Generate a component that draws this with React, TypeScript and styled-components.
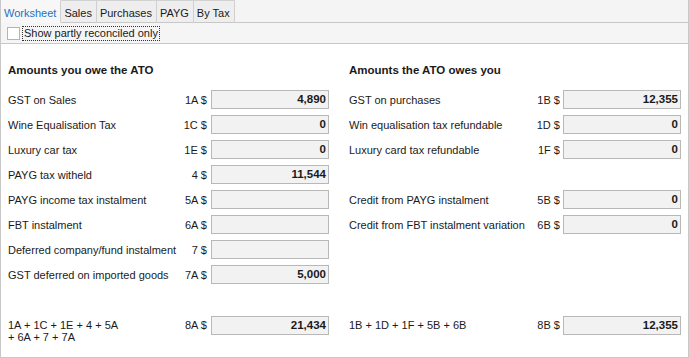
import styled, { createGlobalStyle } from 'styled-components';

const GlobalStyle = createGlobalStyle`
  html, body {
    margin: 0;
    padding: 0;
    background: #ffffff;
  }
  body {
    font-family: 'Liberation Sans', Arial, sans-serif;
    font-size: 11px;
    color: #1a1a1a;
  }
`;

type Row = {
  label: string;
  code?: string;
  value?: string;
  blank?: boolean;
};

const owe: Row[] = [
  { label: 'GST on Sales', code: '1A', value: '4,890' },
  { label: 'Wine Equalisation Tax', code: '1C', value: '0' },
  { label: 'Luxury car tax', code: '1E', value: '0' },
  { label: 'PAYG tax witheld', code: '4', value: '11,544' },
  { label: 'PAYG income tax instalment', code: '5A', value: '' },
  { label: 'FBT instalment', code: '6A', value: '' },
  { label: 'Deferred company/fund instalment', code: '7', value: '' },
  { label: 'GST deferred on imported goods', code: '7A', value: '5,000' },
];

const owed: Row[] = [
  { label: 'GST on purchases', code: '1B', value: '12,355' },
  { label: 'Win equalisation tax refundable', code: '1D', value: '0' },
  { label: 'Luxury card tax refundable', code: '1F', value: '0' },
  { label: '', blank: true },
  { label: 'Credit from PAYG instalment', code: '5B', value: '0' },
  { label: 'Credit from FBT instalment variation', code: '6B', value: '0' },
];

const tabs = ['Worksheet', 'Sales', 'Purchases', 'PAYG', 'By Tax'];

const Frame = styled.div`
  width: 689px;
  height: 358px;
  box-sizing: border-box;
  display: flex;
  flex-direction: column;
  border-left: 1px solid #c8c8c8;
  border-right: 1px solid #c8c8c8;
  border-bottom: 1px solid #c8c8c8;
  background: #ffffff;
`;

const TabStrip = styled.div`
  display: flex;
  height: 23px;
  background: #f4f4f4;
`;

const Tab = styled.div<{ $active?: boolean }>`
  box-sizing: border-box;
  height: 23px;
  padding: 2px 4px 0 3px;
  display: flex;
  align-items: center;
  font-size: 11px;
  color: ${(p) => (p.$active ? '#1e72c6' : '#1a1a1a')};
  background: ${(p) => (p.$active ? '#f7f7f7' : '#eeeeee')};
  border-top: 1px solid ${(p) => (p.$active ? 'transparent' : '#d2d2d2')};
  border-right: 1px solid #d0d0d0;
  border-bottom: 1px solid ${(p) => (p.$active ? 'transparent' : '#c8c8c8')};
`;

const TabFiller = styled.div`
  flex: 1;
  border-bottom: 1px solid #c8c8c8;
`;

const FilterBar = styled.div`
  box-sizing: border-box;
  height: 21px;
  display: flex;
  align-items: center;
  gap: 3px;
  padding-left: 6px;
  background: #f5f5f5;
  border-bottom: 1px solid #c8c8c8;
`;

const CheckBox = styled.span`
  box-sizing: border-box;
  width: 13px;
  height: 13px;
  background: #ffffff;
  border: 1px solid #b4b4b4;
`;

const CheckLabel = styled.span`
  font-size: 11px;
  line-height: 13px;
  outline: 1px dotted #333;
  padding: 0 1px;
`;

const Content = styled.div`
  flex: 1;
  display: flex;
  gap: 19px;
  padding: 19px 0 0 6px;
`;

const Panel = styled.div<{ $width: number }>`
  width: ${(p) => p.$width}px;
  display: flex;
  flex-direction: column;
`;

const Heading = styled.div`
  font-weight: bold;
  font-size: 11.5px;
  height: 14px;
  line-height: 14px;
  margin-bottom: 13px;
  padding-left: 1px;
`;

const Rows = styled.div<{ $gap: number }>`
  display: grid;
  grid-template-columns: minmax(0, 1fr) auto 118px;
  column-gap: ${(p) => p.$gap}px;
  row-gap: 6px;
  grid-auto-rows: 19px;
  align-items: center;
`;

const Label = styled.div`
  padding-left: 1px;
  white-space: nowrap;
`;

const Code = styled.div`
  text-align: right;
`;

const Box = styled.div`
  box-sizing: border-box;
  height: 19px;
  background: #f2f2f2;
  border: 1px solid #b8b8b8;
  font-weight: bold;
  font-size: 11.5px;
  text-align: right;
  padding-right: 2px;
  line-height: 17px;
`;

const Spacer = styled.div`
  grid-column: 1 / -1;
`;

const TotalRow = styled.div<{ $gap: number }>`
  margin-top: auto;
  margin-bottom: 5px;
  height: 36px;
  display: grid;
  grid-template-columns: minmax(0, 1fr) auto 118px;
  column-gap: ${(p) => p.$gap}px;
  align-items: start;
`;

const TotalLabel = styled.div`
  padding-left: 1px;
  padding-top: 3px;
  line-height: 12px;
`;

const TotalCode = styled(Code)`
  padding-top: 3px;
  line-height: 12px;
`;

function Section({
  title,
  rows,
  width,
  gap,
  total,
}: {
  title: string;
  rows: Row[];
  width: number;
  gap: number;
  total: { label: React.ReactNode; code: string; value: string };
}) {
  return (
    <Panel $width={width}>
      <Heading>{title}</Heading>
      <Rows $gap={gap}>
        {rows.map((r, i) =>
          r.blank ? (
            <Spacer key={i} />
          ) : (
            [
              <Label key={'l' + i}>{r.label}</Label>,
              <Code key={'c' + i}>{r.code} $</Code>,
              <Box key={'b' + i}>{r.value}</Box>,
            ]
          )
        )}
      </Rows>
      <TotalRow $gap={gap}>
        <TotalLabel>{total.label}</TotalLabel>
        <TotalCode>{total.code} $</TotalCode>
        <Box>{total.value}</Box>
      </TotalRow>
    </Panel>
  );
}

export default function App() {
  return (
    <>
      <GlobalStyle />
      <Frame>
        <TabStrip>
          {tabs.map((t, i) => (
            <Tab key={t} $active={i === 0}>
              {t}
            </Tab>
          ))}
          <TabFiller />
        </TabStrip>
        <FilterBar>
          <CheckBox />
          <CheckLabel>Show partly reconciled only</CheckLabel>
        </FilterBar>
        <Content>
          <Section
            title="Amounts you owe the ATO"
            rows={owe}
            width={322}
            gap={4}
            total={{
              label: (
                <>
                  1A + 1C + 1E + 4 + 5A
                  <br />+ 6A + 7 + 7A
                </>
              ),
              code: '8A',
              value: '21,434',
            }}
          />
          <Section
            title="Amounts the ATO owes you"
            rows={owed}
            width={333}
            gap={3}
            total={{
              label: '1B + 1D + 1F + 5B + 6B',
              code: '8B',
              value: '12,355',
            }}
          />
        </Content>
      </Frame>
    </>
  );
}
